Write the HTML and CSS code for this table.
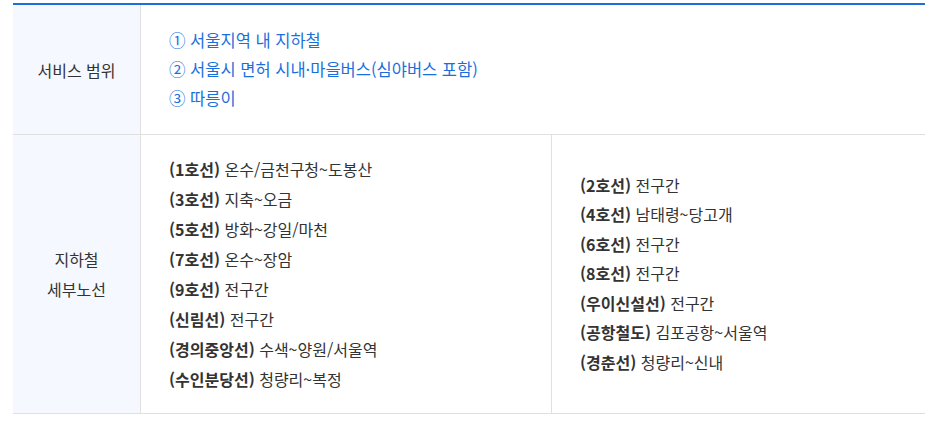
FILE: index.html
```html
<!DOCTYPE html>
<html lang="ko">
<head>
    <meta charset="UTF-8">
    <meta name="viewport" content="width=device-width, initial-scale=1.0">
    <title>서비스 범위</title>
    <link rel="stylesheet" href="styles.css">
</head>
<body>
    <div class="wrap">
        <div class="info-table">
            <div class="row">
                <div class="label">서비스 범위</div>
                <div class="cell">
                    <ul class="scope-list">
                        <li>① 서울지역 내 지하철</li>
                        <li>② 서울시 면허 시내·마을버스(심야버스 포함)</li>
                        <li>③ 따릉이</li>
                    </ul>
                </div>
            </div>

            <div class="row">
                <div class="label">지하철<br>세부노선</div>
                <div class="cell split">
                    <ul class="line-list">
                        <li><b>(1호선)</b> 온수/금천구청~도봉산</li>
                        <li><b>(3호선)</b> 지축~오금</li>
                        <li><b>(5호선)</b> 방화~강일/마천</li>
                        <li><b>(7호선)</b> 온수~장암</li>
                        <li><b>(9호선)</b> 전구간</li>
                        <li><b>(신림선)</b> 전구간</li>
                        <li><b>(경의중앙선)</b> 수색~양원/서울역</li>
                        <li><b>(수인분당선)</b> 청량리~복정</li>
                    </ul>
                    <ul class="line-list">
                        <li><b>(2호선)</b> 전구간</li>
                        <li><b>(4호선)</b> 남태령~당고개</li>
                        <li><b>(6호선)</b> 전구간</li>
                        <li><b>(8호선)</b> 전구간</li>
                        <li><b>(우이신설선)</b> 전구간</li>
                        <li><b>(공항철도)</b> 김포공항~서울역</li>
                        <li><b>(경춘선)</b> 청량리~신내</li>
                    </ul>
                </div>
            </div>
        </div>
    </div>
</body>
</html>
```

FILE: styles.css
```css
* {
    margin: 0;
    padding: 0;
    box-sizing: border-box;
    font-family: "Noto Sans CJK KR", "Noto Sans", sans-serif;
}

body {
    background: #fff;
    color: #333;
}

.wrap {
    padding: 3px 6px 0 13px;
}

.info-table {
    border-top: 2px solid #1b6fdc;
}

.row {
    display: grid;
    grid-template-columns: 128px 1fr;
    border-bottom: 1px solid #e0e0e0;
}

.label {
    background: #f5f8fe;
    border-right: 1px solid #e0e0e0;
    display: flex;
    align-items: center;
    justify-content: center;
    text-align: center;
    font-size: 16px;
    line-height: 30px;
    color: #333;
}

.cell {
    padding: 0 28px;
    display: flex;
    align-items: center;
}

.scope-list {
    list-style: none;
    padding: 21px 0;
    font-size: 16.5px;
    line-height: 29px;
    color: #1b6fdc;
}

.split {
    padding: 0;
    align-items: stretch;
}

.line-list {
    list-style: none;
    font-size: 16px;
    line-height: 29.5px;
    padding: 19px 28px;
    display: flex;
    flex-direction: column;
    justify-content: center;
}

.line-list:first-child {
    width: 411px;
    line-height: 30px;
    border-right: 1px solid #e0e0e0;
}

.line-list b {
    font-weight: 700;
    color: #333;
}
```
